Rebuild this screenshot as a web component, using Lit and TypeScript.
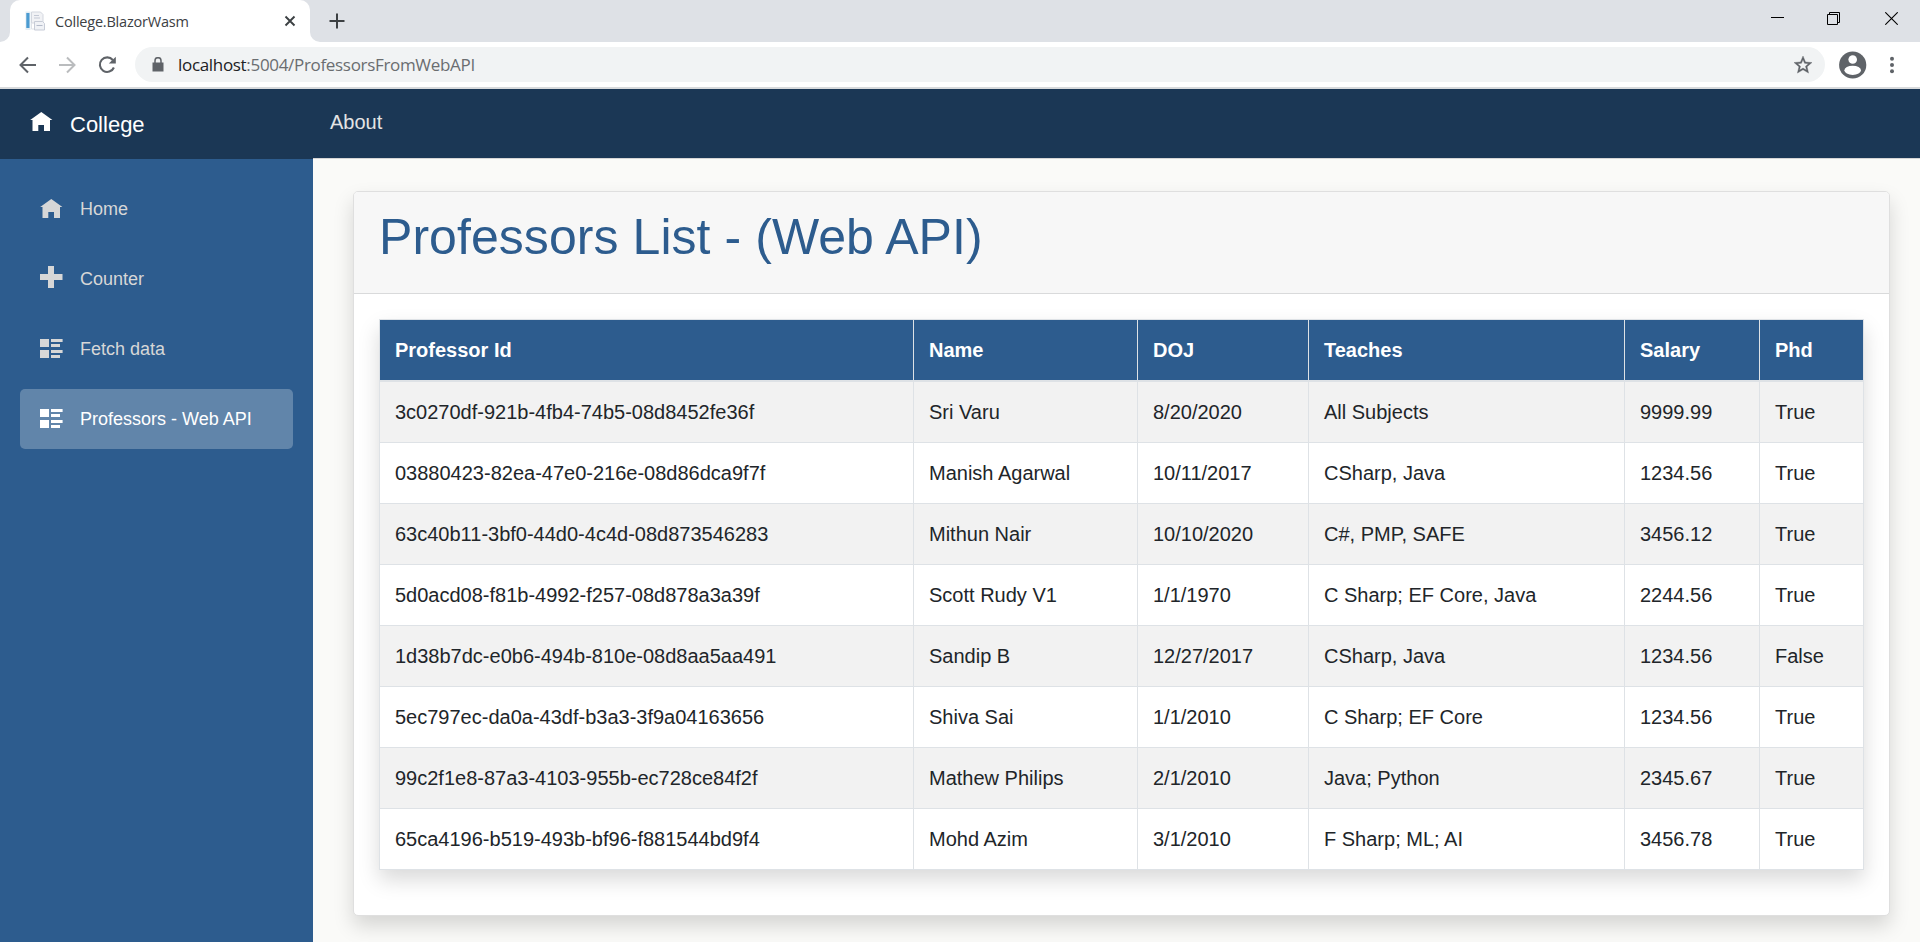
import { LitElement, html, css, svg } from "lit";
import { customElement, property } from "lit/decorators.js";

const GLYPHS: Record<string, string> = {
  home: "M11.300 3L.2 11h2.300v11h5.800v-6h5.700v6h6V11h2.400z",
  plus: "M8 0h6v8h8.500v6H14v8H8v-8H0V8h8z",
  list: "M0 3h9v8H0zM0 14h9v8H0zM11 3h11.600v3H11zM11 8h9v3h-9zM11 14h11.600v3H11zM11 19h9v3h-9z",
};

@customElement("nav-icon")
class NavIcon extends LitElement {
  @property() name = "home";
  static styles = css`
    :host { display: block; width: 23px; height: 22px; }
    svg { display: block; }
  `;
  render() {
    return html`<svg width="23" height="22" viewBox="0 0 23 22">${svg`<path d=${GLYPHS[this.name]} fill="currentColor"/>`}</svg>`;
  }
}

@customElement("browser-bar")
class BrowserBar extends LitElement {
  static styles = css`
    :host { display: block; font-family: "Open Sans", "Noto Sans", sans-serif; }
    svg { display: block; flex: none; }
    .tabs { height: 42px; background: #dee1e6; display: flex; align-items: stretch; }
    .curve { align-self: flex-end; }
    .tab { width: 300px; background: #fff; border-radius: 10px 10px 0 0; box-sizing: border-box;
      display: flex; align-items: center; padding: 0 14px 0 15px; }
    .title { font-size: 14.5px; color: #3c4043; margin-left: 10px; flex: 1; white-space: nowrap; letter-spacing: -0.21px; }
    .new { align-self: center; margin-left: 9px; }
    .win { margin-left: auto; display: flex; padding: 12px 22px 0 0; }
    .max { margin-left: 43px; }
    .close { margin-left: 45px; }
    .tools { height: 45px; background: #fff; display: flex; align-items: center; box-sizing: border-box; padding: 0 19px; }
    .fwd { margin-left: 22px; }
    .reload { margin-left: 22px; }
    .omni { margin-left: 18px; width: 1690px; height: 35px; border-radius: 18px; background: #f1f3f4;
      display: flex; align-items: center; box-sizing: border-box; padding: 0 13px 0 17px; }
    .url { margin-left: 14px; flex: 1; font-size: 17px; color: #6a6d70; white-space: nowrap; letter-spacing: -0.32px; }
    .host { color: #202124; }
    .avatar { margin-left: 14px; }
    .dots { margin-left: 22px; }
    .edge { height: 2px; background: #d8dadc; }
  `;
  render() {
    return html`
      <div class="tabs">
        <svg class="curve" width="10" height="10"><path d="M10 0V10H0A10 10 0 0 0 10 0z" fill="#fff"/></svg>
        <div class="tab">
          <svg width="20" height="20" viewBox="0 0 20 20">
            <rect x=".5" y=".5" width="5" height="18.500" fill="#e4edf4"/><rect x="1.300" y="2" width="3.200" height="15" fill="#4b9bd1"/>
            <path d="M6.500 1h9l2.500 2.500V12H6.500z" fill="#f1f2f5" stroke="#d3d7df"/>
            <path d="M6.500 12v6h3" fill="none" stroke="#dfe2e8"/>
            <path d="M9 4.500h5M9 7h6" stroke="#c3c9d5"/>
            <path d="M9.500 10.500h8l2 2v6.500h-10z" fill="#f0f2f6" stroke="#c7ccd7"/>
            <path d="M11.500 14.500h6" stroke="#b4bbca"/>
          </svg>
          <span class="title">College.BlazorWasm</span>
          <svg width="12" height="12" viewBox="0 0 12 12"><path d="M1.500 1.500l9 9M10.500 1.500l-9 9" stroke="#3c4043" stroke-width="1.900"/></svg>
        </div>
        <svg class="curve" width="10" height="10"><path d="M0 0V10H10A10 10 0 0 1 0 0z" fill="#fff"/></svg>
        <svg class="new" width="16" height="16"><path d="M8 .5v15M.5 8h15" stroke="#3c4043" stroke-width="2"/></svg>
        <div class="win">
          <svg width="13" height="13"><path d="M0 5.500h13" stroke="#000"/></svg>
          <svg class="max" width="13" height="13"><path d="M.5 2.500h10v10h-10zM2.500 2.500v-2h10v10h-2" fill="none" stroke="#000"/></svg>
          <svg class="close" width="13" height="13"><path d="M.3.3l12.400 12.400M12.700.3L.3 12.700" stroke="#000" stroke-width="1.1"/></svg>
        </div>
      </div>
      <div class="tools">
        <svg width="17" height="18" viewBox="0 0 17 18"><path d="M17 9H2M9 1.500L1.500 9 9 16.500" fill="none" stroke="#5f6368" stroke-width="2"/></svg>
        <svg class="fwd" width="18" height="18" viewBox="0 0 18 18"><path d="M1 9h15M9 1.500L16.500 9 9 16.500" fill="none" stroke="#babcbe" stroke-width="2"/></svg>
        <svg class="reload" width="19" height="18" viewBox="0 0 19 18"><path d="M14.800 4A7.300 7.300 0 1 0 15.900 11.500" fill="none" stroke="#5f6368" stroke-width="2.100"/><path d="M17.800 .8V7.600H10.800z" fill="#5f6368"/></svg>
        <div class="omni">
          <svg width="12" height="15" viewBox="0 0 12 15"><path d="M.5 5.500h11V14.500H.5z" fill="#5f6368"/><path d="M3 6V3.700a3 3 0 0 1 6 0V6" fill="none" stroke="#5f6368" stroke-width="1.500"/></svg>
          <span class="url"><span class="host">localhost</span>:5004/ProfessorsFromWebAPI</span>
          <svg width="18" height="18" viewBox="2 2 20 20"><path d="M22 9.240l-7.190-.62L12 2 9.190 8.630 2 9.240l5.460 4.730L5.820 21 12 17.270 18.180 21l-1.630-7.030L22 9.240zM12 15.400l-3.760 2.270 1-4.280-3.320-2.880 4.380-.38L12 6.100l1.710 4.040 4.380.38-3.320 2.880 1 4.280L12 15.400z" fill="#5f6368" stroke="#5f6368" stroke-width=".4"/></svg>
        </div>
        <svg class="avatar" width="28" height="28" viewBox="0 0 28 28"><circle cx="13.700" cy="14" r="13.600" fill="#5f6368"/><circle cx="13.700" cy="8.500" r="4.300" fill="#fff"/><ellipse cx="13.700" cy="19.300" rx="8.300" ry="4.600" fill="#fff"/></svg>
        <svg class="dots" width="6" height="18"><g fill="#5f6368"><circle cx="3" cy="2.700" r="2"/><circle cx="3" cy="9" r="2"/><circle cx="3" cy="15.300" r="2"/></g></svg>
      </div>
      <div class="edge"></div>`;
  }
}

const NAV = [
  { icon: "home", label: "Home" },
  { icon: "plus", label: "Counter" },
  { icon: "list", label: "Fetch data" },
  { icon: "list", label: "Professors - Web API", active: true },
];

@customElement("side-nav")
class SideNav extends LitElement {
  static styles = css`
    :host { display: block; background: #2d5c8e; }
    .brand { height: 70px; box-sizing: border-box; background: rgba(0, 0, 0, 0.4); color: #fff; font-size: 22px;
      display: flex; align-items: center; padding: 2px 0 0 30px; line-height: 30px; }
    .brand nav-icon { margin: 0 17px 10px 0; }
    .items { display: flex; flex-direction: column; gap: 10px; padding: 20px; }
    .item { height: 60px; box-sizing: border-box; padding: 0 0 0 20px; display: flex; align-items: center; color: #d7d7d7;
      font-size: 18px; border-radius: 5px; white-space: nowrap; }
    .item nav-icon { margin: 0 17px 4px 0; }
    .active { background: rgba(255, 255, 255, 0.25); color: #fff; }
  `;
  render() {
    return html`
      <div class="brand"><nav-icon name="home"></nav-icon>College</div>
      <nav class="items">
        ${NAV.map((n) => html`<div class="item ${n.active ? "active" : ""}"><nav-icon name=${n.icon}></nav-icon>${n.label}</div>`)}
      </nav>`;
  }
}

const HEAD = ["Professor Id", "Name", "DOJ", "Teaches", "Salary", "Phd"];
const ROWS = [
  ["3c0270df-921b-4fb4-74b5-08d8452fe36f", "Sri Varu", "8/20/2020", "All Subjects", "9999.99", "True"],
  ["03880423-82ea-47e0-216e-08d86dca9f7f", "Manish Agarwal", "10/11/2017", "CSharp, Java", "1234.56", "True"],
  ["63c40b11-3bf0-44d0-4c4d-08d873546283", "Mithun Nair", "10/10/2020", "C#, PMP, SAFE", "3456.12", "True"],
  ["5d0acd08-f81b-4992-f257-08d878a3a39f", "Scott Rudy V1", "1/1/1970", "C Sharp; EF Core, Java", "2244.56", "True"],
  ["1d38b7dc-e0b6-494b-810e-08d8aa5aa491", "Sandip B", "12/27/2017", "CSharp, Java", "1234.56", "False"],
  ["5ec797ec-da0a-43df-b3a3-3f9a04163656", "Shiva Sai", "1/1/2010", "C Sharp; EF Core", "1234.56", "True"],
  ["99c2f1e8-87a3-4103-955b-ec728ce84f2f", "Mathew Philips", "2/1/2010", "Java; Python", "2345.67", "True"],
  ["65ca4196-b519-493b-bf96-f881544bd9f4", "Mohd Azim", "3/1/2010", "F Sharp; ML; AI", "3456.78", "True"],
];

@customElement("professor-card")
class ProfessorCard extends LitElement {
  static styles = css`
    :host { display: block; background: #fff; border: 1px solid #dfdfdf; border-radius: 5px; box-shadow: 0 10px 20px rgba(0, 0, 0, 0.15); }
    .header { background: #f7f7f7; border-bottom: 1px solid #d9dadb; padding: 15px 25px 16px; border-radius: 4px 4px 0 0; }
    h1 { margin: 0 0 10px; font-size: 50px; line-height: 60px; font-weight: 400; color: #2d5c8e; letter-spacing: 0.06px; }
    .body { padding: 25px 25px 45px; }
    .grid { display: grid; grid-template-columns: 534px 224px 171px 316px 135px 105px; width: 1485px; box-sizing: border-box;
      border-top: 1px solid #dee2e6; box-shadow: 0 10px 20px rgba(0, 0, 0, 0.15); }
    .cell { box-sizing: border-box; height: 61px; padding: 15px; line-height: 30px; border-left: 1px solid #dee2e6;
      border-bottom: 1px solid #dee2e6; white-space: nowrap; background: #fff; }
    .last { border-right: 1px solid #dee2e6; }
    .th { height: 62px; background: #2d5c8e; color: #fff; font-weight: 700; border-bottom-width: 2px; }
    .odd { background: #f2f2f2; }
  `;
  render() {
    const edge = (i: number) => (i === HEAD.length - 1 ? "last" : "");
    return html`
      <div class="header"><h1>Professors List - (Web API)</h1></div>
      <div class="body">
        <div class="grid">
          ${HEAD.map((h, i) => html`<div class="cell th ${edge(i)}">${h}</div>`)}
          ${ROWS.map((r, n) => r.map((c, i) => html`<div class="cell ${n % 2 ? "" : "odd"} ${edge(i)}">${c}</div>`))}
        </div>
      </div>`;
  }
}

@customElement("app-root")
class AppRoot extends LitElement {
  static styles = css`
    :host { display: flex; flex-direction: column; height: 942px; overflow: hidden; color: #212529;
      font-family: "Liberation Sans", Arial, sans-serif; font-size: 20px; }
    .page { flex: 1; display: flex; min-height: 0; background: #fafaf8; }
    side-nav { width: 313px; flex: none; }
    .main { flex: 1; min-width: 0; }
    .top { height: 70px; box-sizing: border-box; background: #1b3755; border-bottom: 1px solid #d6d5d5; color: #e4e4e4;
      line-height: 30px; padding: 18px 17px; }
    .content { padding: 32px 30px 0 40px; }
  `;
  render() {
    return html`
      <browser-bar></browser-bar>
      <div class="page">
        <side-nav></side-nav>
        <div class="main">
          <div class="top">About</div>
          <div class="content"><professor-card></professor-card></div>
        </div>
      </div>`;
  }
}
